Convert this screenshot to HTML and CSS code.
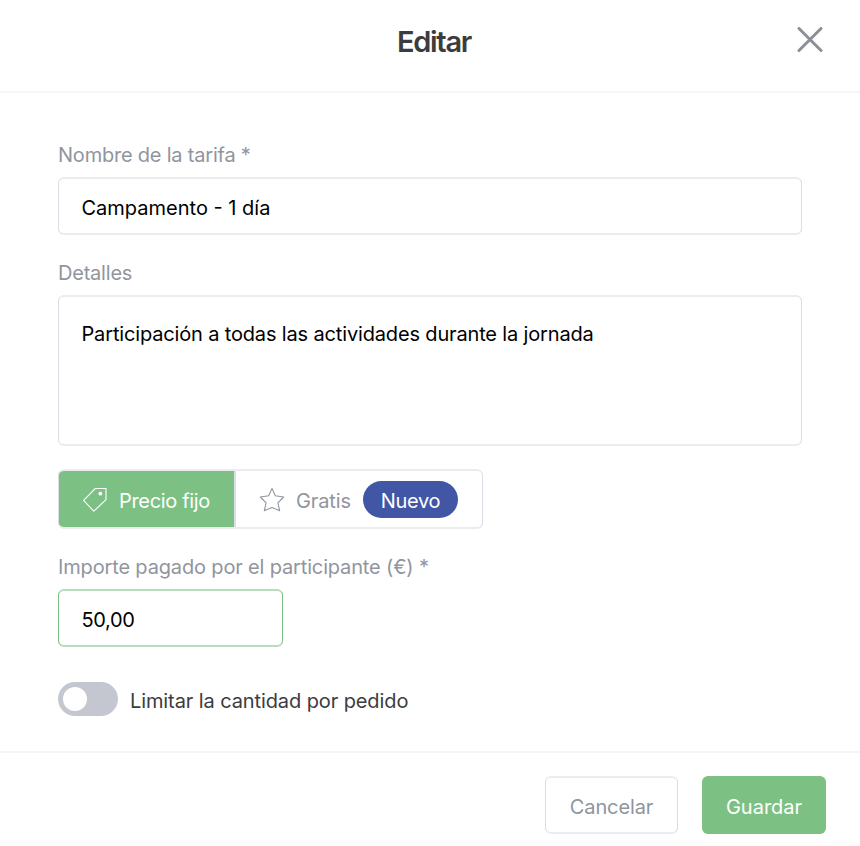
FILE: index.html
```html
<!DOCTYPE html>
<html lang="es">
<head>
<meta charset="utf-8">
<title>Editar</title>
<link rel="stylesheet" href="styles.css">
</head>
<body>
<div class="modal">
  <header class="header">
    <h1 class="title">Editar</h1>
    <button class="close" aria-label="Cerrar"><svg width="26" height="26" viewBox="0 0 26 26"><path d="M2 1.5 24 23.5M24 1.5 2 23.5"/></svg></button>
  </header>
  <main class="content">
    <div class="label"><span class="t-name">Nombre de la tarifa *</span></div>
    <div class="field"><span class="t-camp">Campamento - 1 día</span></div>
    <div class="label"><span class="t-det">Detalles</span></div>
    <div class="field area"><span class="t-part">Participación a todas las actividades durante la jornada</span></div>
    <div class="segments">
      <div class="segment active">
        <svg class="icon" width="26" height="26" viewBox="0 0 26 26"><path d="M13.3 2.5H24V13.6L11.8 25.2 1.6 14.3Z"/><circle class="hole" cx="18.3" cy="7.7" r="1.9"/></svg>
        <span class="t-fijo">Precio fijo</span>
      </div>
      <div class="segment">
        <svg class="icon" width="26" height="26" viewBox="0 0 26 26"><path d="M13 2.4 16.3 9.8 24.7 11 18.9 16.8 20.7 24.8 13 21.4 5.3 24.8 7.1 16.8 1.3 11 9.7 9.8Z"/></svg>
        <span class="t-gratis">Gratis</span>
        <span class="badge"><span class="t-nuevo">Nuevo</span></span>
      </div>
    </div>
    <div class="label"><span class="t-imp">Importe pagado por el participante (€) *</span></div>
    <div class="field amount"><span class="t-amt">50,00</span></div>
    <div class="limit">
      <span class="toggle"><span class="knob"></span></span>
      <span class="t-lim">Limitar la cantidad por pedido</span>
    </div>
  </main>
  <footer class="footer">
    <button class="button cancel"><span class="t-can">Cancelar</span></button>
    <button class="button save"><span class="t-gua">Guardar</span></button>
  </footer>
</div>
</body>
</html>
```
FILE: styles.css
```css
* { box-sizing: border-box; }
body {
  margin: 0;
  background: #fff;
  color: #000;
  font: 400 20px/24px Inter, "Liberation Sans", sans-serif;
}
.modal { width: 860px; height: 846px; display: flex; flex-direction: column; overflow: hidden; }
.header {
  height: 93px;
  display: grid;
  grid-template-columns: 1fr auto 1fr;
  align-items: start;
  padding: 24px 37px 0 45px;
  border-bottom: 2px solid #f6f6f7;
}
.title { grid-column: 2; margin: 0; font-size: 29px; line-height: 36px; font-weight: 600; color: #3c3c3e; letter-spacing: -1.3px; }
.close { justify-self: end; margin-top: 3px; width: 26px; height: 26px; padding: 0; border: 0; background: none; }
.close svg { display: block; fill: none; stroke: #8b9098; stroke-width: 3; stroke-linecap: round; }
.content { height: 658px; padding: 50px 58px 0; }
.content span, .button span { white-space: nowrap; }
.label { height: 34px; color: #90959e; }
.field {
  height: 58px;
  margin-bottom: 26px;
  padding: 17px 22.5px;
  border: solid;
  border-width: 2px 1px;
  border-color: #ecebf2 #dcdce5;
  border-radius: 6px;
}
.area { height: 151px; margin-bottom: 23px; padding-top: 25px; }
.segments {
  width: 425px;
  height: 60px;
  margin-bottom: 26px;
  display: flex;
  overflow: hidden;
  border: solid;
  border-width: 2px 1px;
  border-color: #ecebf2 #dcdce5;
  border-radius: 6px;
}
.segment { display: flex; align-items: center; flex: 1; min-width: 0; padding: 0 24px 0 23px; color: #90959e; }
.segment.active { flex: 0 0 177px; padding-right: 0; background: #7cc183; color: #fff; border-right: 2px solid #dcdfe5; }
.icon { flex: none; margin-right: 11px; fill: none; stroke: currentColor; stroke-width: 1.1; stroke-linejoin: round; }
.segment > span { padding-top: 3px; }
.segment .hole { fill: currentColor; stroke: none; }
.segment > .badge {
  width: 95px;
  height: 37px;
  margin-left: auto;
  display: flex;
  justify-content: center;
  align-items: center;
  border-radius: 19px;
  background: #4156a5;
  color: #fff;
}
.field.amount { width: 225px; margin-bottom: 35px; border-color: #b5ddb9 #7cc183; }
.limit { display: flex; align-items: center; gap: 12px; color: #3c3c3e; }
.toggle { width: 60px; height: 34px; padding: 5px; border-radius: 17px; background: #c4c7cf; }
.knob { display: block; width: 24px; height: 24px; border-radius: 50%; background: #fff; }
.t-lim { padding-top: 4px; letter-spacing: -.1px; }
.t-name, .t-det { letter-spacing: -.21px; }
.t-part, .t-imp { letter-spacing: -.155px; }
.t-fijo { letter-spacing: -.33px; }
.t-gratis, .t-can { letter-spacing: -.12px; }
.t-nuevo, .t-amt { letter-spacing: -.35px; }
.footer { height: 95px; display: flex; justify-content: flex-end; gap: 24px; padding: 23px 34px 0; border-top: 2px solid #f6f6f7; }
.button { height: 58px; padding: 3px 0 0; border-radius: 6px; font: inherit; }
.cancel { width: 133px; border: solid; border-width: 2px 1px; border-color: #ecebf2 #dcdce5; padding-top: 3px; background: #fff; color: #90959e; }
.save { width: 124px; border: 0; background: #7cc183; color: #fff; }
```
